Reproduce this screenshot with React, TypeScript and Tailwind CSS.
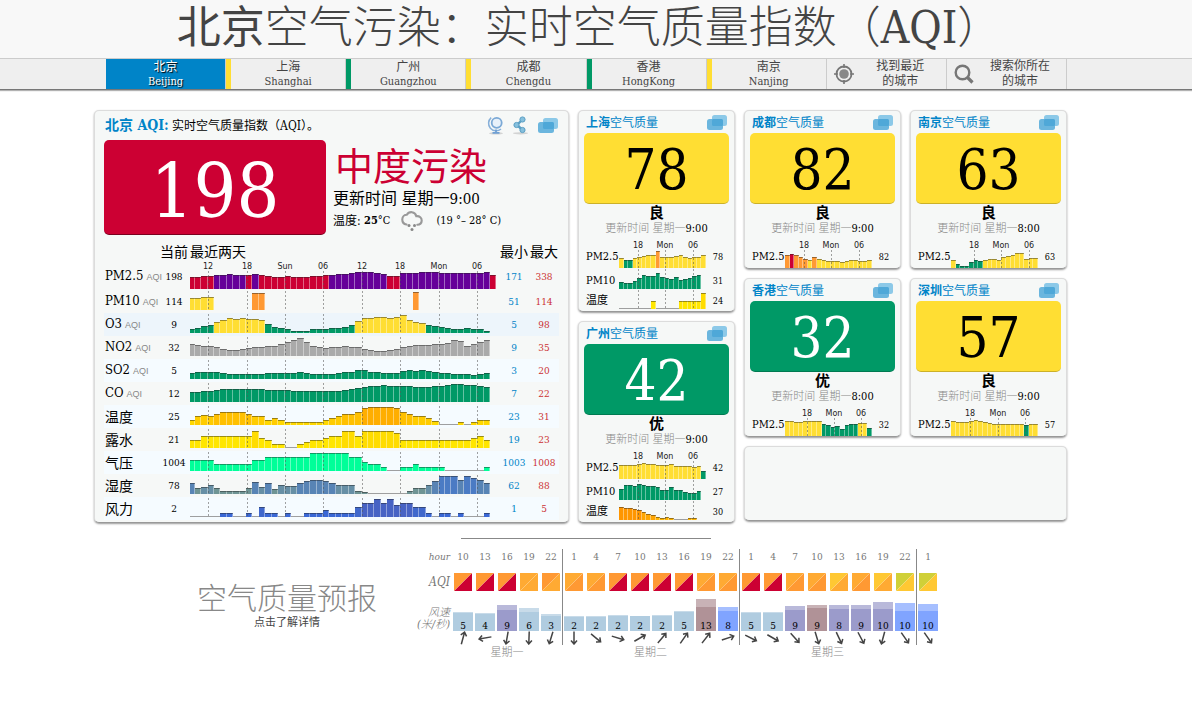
import React from "react";

const SERIF = "font-['DejaVu_Serif_Condensed','DejaVu_Serif','Noto_Sans_CJK_SC',serif]";

const RED = "#cc0033";
const PURPLE = "#660099";
const YELLOW = "#ffde33";
const ORANGE = "#ff9933";
const GREEN = "#009966";
const GRAY = "#aaaaaa";

type Bar = { h: number; c: string };
type Mark = { x: number; label: string };

const LETTERS: Record<string, string> = { r: RED, p: PURPLE, y: YELLOW, o: ORANGE, g: GREEN, n: GRAY };

/** Pairs heights with colour letters such as "r4 p5". */
function paint(heights: number[], spec: string): Bar[] {
  const colours = spec.split(" ").flatMap((s) => Array<string>(Number(s.slice(1))).fill(LETTERS[s[0]]));
  return heights.map((h, i) => ({ h, c: colours[i] ?? colours[colours.length - 1] }));
}

function shade(heights: number[], pick: (h: number) => string): Bar[] {
  return heights.map((h) => ({ h, c: pick(h) }));
}

const warm = (h: number) => (h >= 17 ? "#ffae00" : h >= 11 ? "#ffc000" : h >= 7 ? "#ffcc00" : "#ffd800");
const hot = (h: number) => (h >= 10 ? "#ff9600" : h >= 5 ? "#ffa500" : "#ffb400");
const dew = (h: number) => (h >= 15 ? "#ffdc00" : "#ffe600");
const humid = (h: number) => (h >= 16 ? "#4b7bc4" : h >= 11 ? "#5884b5" : h >= 7 ? "#678fa5" : "#6f9494");
const wind = (h: number) => (h >= 12 ? "#4763c4" : h >= 9 ? "#4068cc" : "#3a68d6");

function Bars({ bars, base, step, first }: { bars: Bar[]; base: number; step: number; first: number }) {
  return (
    <>
      {bars.map((b, i) => {
        if (b.h === 0) return null;
        const x = i === 0 ? 0 : first + step * (i - 1);
        const w = i === 0 ? first : step;
        return (
          <g key={i}>
            {b.h > 1 && <rect x={x} y={base - b.h} width={w} height={b.h} fill={b.c} />}
            {b.h > 1 && <rect x={x + w - 1} y={base - b.h} width={1} height={b.h} fill="#fff" opacity={0.4} />}
            <rect x={x} y={base - b.h} width={w} height={1} fill={b.h > 1 ? "#222" : "#888"} opacity={b.h > 1 ? 0.45 : 0.8} />
          </g>
        );
      })}
    </>
  );
}

function Chart({
  bars, width, height, pad = 0, step, first, marks, labels = false,
}: {
  bars: Bar[]; width: number; height: number; pad?: number; step: number; first: number; marks: Mark[]; labels?: boolean;
}) {
  return (
    <svg width={width} height={height} className="block overflow-visible" shapeRendering="crispEdges" aria-hidden="true">
      <Bars bars={bars} base={height - pad} step={step} first={first} />
      {marks.map((m) => (
        <g key={m.x}>
          <line x1={m.x} x2={m.x} y1={labels ? 9 : 1} y2={height - pad} stroke="#555" strokeOpacity={0.55} strokeDasharray="2 2" />
          {labels && (
            <text x={m.x} y={7} textAnchor="middle" fontSize={8} fontFamily="DejaVu Sans, sans-serif" fill="#222">
              {m.label}
            </text>
          )}
        </g>
      ))}
    </svg>
  );
}

const mainMarks: Mark[] = [
  { x: 18, label: "12" }, { x: 57, label: "18" }, { x: 95, label: "Sun" }, { x: 133, label: "06" },
  { x: 172, label: "12" }, { x: 210, label: "18" }, { x: 249, label: "Mon" }, { x: 287, label: "06" },
];

type Row = { name: string; unit?: boolean; now: string; min: string; max: string; bars: Bar[]; tone: string };

const rows: Row[] = [
  {
    name: "PM2.5", unit: true, now: "198", min: "171", max: "338", tone: "",
    bars: paint(
      [12, 12, 13, 13, 14, 14, 15, 14, 14, 14, 15, 14, 13, 12, 12, 13, 12, 12, 12, 13, 13, 14, 14, 15, 15, 16, 17, 17, 17, 16, 15, 13, 13, 16, 16, 16, 17, 17, 17, 16, 16, 16, 16, 16, 16, 16, 17, 14],
      "r4 p5 r1 p1 r11 p9 r2 p14 r1",
    ),
  },
  {
    name: "PM10", unit: true, now: "114", min: "51", max: "114", tone: "",
    bars: paint([12, 12, 13, 13, 0, 0, 0, 0, 0, 0, 17, 17, ...Array<number>(23).fill(0), 18], "y4 o40"),
  },
  {
    name: "O3", unit: true, now: "9", min: "5", max: "98", tone: "bg-[#edf5fb]",
    bars: paint(
      [4, 5, 7, 8, 11, 13, 15, 14, 15, 14, 14, 13, 9, 6, 5, 4, 2, 2, 2, 4, 4, 4, 5, 5, 6, 8, 12, 15, 15, 16, 16, 15, 16, 18, 13, 11, 10, 8, 7, 6, 5, 4, 4, 5, 4, 4, 2],
      "g4 y8 g14 y11 g10",
    ),
  },
  {
    name: "NO2", unit: true, now: "32", min: "9", max: "35", tone: "",
    bars: paint(
      [12, 11, 10, 10, 9, 7, 6, 6, 7, 8, 9, 9, 10, 10, 12, 14, 16, 18, 14, 10, 9, 8, 9, 9, 10, 9, 9, 7, 6, 5, 5, 6, 7, 9, 10, 11, 11, 11, 12, 12, 13, 16, 15, 10, 12, 14, 16],
      "n47",
    ),
  },
  {
    name: "SO2", unit: true, now: "5", min: "3", max: "20", tone: "bg-[#f5fbff]",
    bars: paint(
      [6, 7, 7, 7, 7, 6, 5, 5, 5, 5, 5, 5, 6, 6, 6, 6, 6, 7, 6, 5, 5, 5, 5, 6, 7, 7, 9, 9, 7, 7, 6, 6, 6, 8, 9, 8, 9, 8, 7, 6, 6, 5, 5, 5, 4, 5, 6],
      "g47",
    ),
  },
  {
    name: "CO", unit: true, now: "12", min: "7", max: "22", tone: "",
    bars: paint(
      [10, 10, 11, 11, 12, 13, 13, 13, 13, 13, 13, 13, 12, 12, 12, 12, 11, 11, 11, 11, 11, 11, 11, 11, 12, 13, 14, 15, 16, 16, 17, 16, 16, 16, 16, 15, 15, 15, 16, 16, 17, 18, 18, 17, 17, 16, 15],
      "g47",
    ),
  },
  {
    name: "温度", now: "25", min: "23", max: "31", tone: "bg-[#f5fbff]",
    bars: shade(
      [5, 9, 10, 9, 11, 13, 13, 13, 13, 11, 9, 9, 5, 7, 5, 3, 3, 3, 3, 3, 3, 5, 7, 9, 11, 11, 13, 17, 18, 18, 18, 18, 17, 13, 11, 9, 9, 7, 4, 1, 1, 1, 3, 1, 3, 5, 5],
      warm,
    ),
  },
  {
    name: "露水", now: "21", min: "19", max: "23", tone: "",
    bars: shade(
      [8, 8, 12, 12, 12, 12, 12, 12, 12, 12, 17, 10, 8, 4, 4, 1, 1, 4, 6, 8, 8, 10, 12, 12, 17, 17, 12, 17, 17, 17, 17, 17, 15, 8, 8, 8, 8, 8, 8, 8, 8, 8, 8, 8, 10, 12, 8],
      dew,
    ),
  },
  {
    name: "气压", now: "1004", min: "1003", max: "1008", tone: "bg-[#f5fbff]",
    bars: shade(
      [11, 11, 11, 11, 7, 7, 7, 7, 7, 7, 11, 11, 14, 14, 14, 14, 14, 14, 14, 18, 18, 18, 18, 18, 18, 14, 14, 9, 7, 7, 4, 1, 1, 4, 4, 7, 4, 4, 4, 4, 1, 1, 1, 1, 1, 1, 4],
      () => "#00ff99",
    ),
  },
  {
    name: "湿度", now: "78", min: "62", max: "88", tone: "",
    bars: shade(
      [11, 6, 7, 9, 6, 3, 3, 3, 3, 6, 12, 7, 11, 5, 9, 8, 8, 11, 13, 14, 14, 13, 11, 9, 9, 9, 3, 2, 1, 1, 1, 1, 1, 1, 3, 6, 6, 9, 13, 18, 18, 18, 14, 18, 16, 14, 11],
      humid,
    ),
  },
  {
    name: "风力", now: "2", min: "1", max: "5", tone: "bg-[#f5fbff]",
    bars: shade(
      [1, 1, 1, 1, 1, 4, 4, 1, 1, 4, 1, 10, 4, 4, 1, 4, 1, 1, 4, 4, 4, 7, 4, 4, 4, 4, 10, 14, 14, 18, 14, 18, 12, 14, 14, 10, 10, 4, 1, 4, 4, 1, 4, 1, 1, 1, 4],
      wind,
    ),
  },
];

type MiniRow = { name: string; value: string; bars: Bar[] };
type City = { name: string; aqi: string; level: string; time: string; good?: boolean; marks: number[]; rows: MiniRow[] };

const shanghai: City = {
  name: "上海", aqi: "78", level: "良", time: "9:00", marks: [19, 46, 74],
  rows: [
    { name: "PM2.5", value: "78", bars: paint([10, 8, 8, 10, 11, 12, 13, 13, 17, 11, 11, 11, 12, 13, 11, 10, 11, 11, 13], "y1 g2 y5 o1 y10") },
    { name: "PM10", value: "31", bars: paint([7, 6, 6, 8, 11, 14, 13, 13, 16, 12, 11, 10, 12, 9, 10, 11, 13, 14], "g18") },
    { name: "温度", value: "24", bars: shade([1, 1, 1, 1, 1, 1, 1, 8, 1, 1, 1, 1, 1, 8, 8, 8, 8, 8, 16], dew) },
  ],
};
const guangzhou: City = {
  name: "广州", aqi: "42", level: "优", time: "9:00", good: true, marks: [19, 46, 74],
  rows: [
    { name: "PM2.5", value: "42", bars: paint([14, 14, 14, 14, 15, 16, 15, 15, 14, 14, 14, 15, 13, 13, 13, 13, 12, 13, 8], "y18 g1") },
    { name: "PM10", value: "27", bars: paint([11, 15, 15, 14, 16, 15, 14, 14, 13, 10, 10, 13, 10, 10, 8, 7, 7, 9], "g18") },
    { name: "温度", value: "30", bars: shade([13, 12, 12, 11, 10, 8, 6, 5, 3, 2, 3, 2, 1, 1, 1, 2, 2], hot) },
  ],
};
const chengdu: City = {
  name: "成都", aqi: "82", level: "良", time: "9:00", marks: [19, 46, 74],
  rows: [{ name: "PM2.5", value: "82", bars: paint([13, 14, 13, 11, 9, 8, 11, 9, 8, 7, 7, 7, 6, 7, 8, 8, 7, 7, 8], "o1 r1 o3 y1 o1 y12") }],
};
const hongkong: City = {
  name: "香港", aqi: "32", level: "优", time: "8:00", good: true, marks: [22, 49, 76],
  rows: [{ name: "PM2.5", value: "32", bars: paint([15, 15, 14, 14, 15, 15, 15, 15, 12, 11, 9, 10, 7, 11, 12, 12, 13, 13, 8], "y8 g8 y2 g1") }],
};
const nanjing: City = {
  name: "南京", aqi: "63", level: "良", time: "8:00", marks: [23, 50, 78],
  rows: [{ name: "PM2.5", value: "63", bars: paint([8, 4, 2, 2, 6, 8, 7, 8, 9, 9, 8, 11, 12, 13, 15, 15, 9, 10, 10], "y1 g6 y12") }],
};
const shenzhen: City = {
  name: "深圳", aqi: "57", level: "良", time: "9:00", marks: [19, 47, 74],
  rows: [{ name: "PM2.5", value: "57", bars: paint([15, 14, 14, 14, 15, 16, 15, 14, 13, 12, 12, 12, 12, 12, 12, 12, 11, 12, 12], "y16 g1 y2") }],
};

const PANEL = "rounded-[5px] border border-[#dcdcdc] border-b-[#999] bg-[#f6f8f7] shadow-[0_1px_2px_rgba(0,0,0,0.4)]";

function ChatIcon() {
  return (
    <svg width="22" height="17" viewBox="0 0 22 17" aria-hidden="true">
      <rect x="6" y="1" width="15" height="11" rx="2.5" fill="#8cc9e8" />
      <rect x="1" y="5" width="16" height="11" rx="2.5" fill="#6bb6de" />
      <rect x="6" y="5" width="11" height="7" rx="1.5" fill="#4fa8d8" />
    </svg>
  );
}

function GlobeIcon() {
  return (
    <svg width="18" height="19" viewBox="0 0 18 19" fill="none" aria-hidden="true">
      <ellipse cx="9" cy="17.3" rx="7" ry="1.2" fill="#bbb" opacity="0.6" />
      <circle cx="9.7" cy="6.8" r="5" stroke="#7ba9d6" strokeWidth="1.8" fill="#e8f1fa" />
      <path d="M4.2 1.6a7.3 7.3 0 0 0 9.8 11.4" stroke="#86afd9" strokeWidth="1.5" />
      <path d="M9 13.6v2.6M5.5 16.8h7" stroke="#6fa0d4" strokeWidth="1.8" />
    </svg>
  );
}

function ShareIcon() {
  return (
    <svg width="18" height="19" viewBox="0 0 18 19" aria-hidden="true">
      <ellipse cx="9.5" cy="17.3" rx="7.5" ry="1.1" fill="#bbb" opacity="0.6" />
      <path d="M11.500 3.500 6 9l5.500 5" stroke="#5b9fc4" strokeWidth="2.400" fill="none" />
      <circle cx="11.500" cy="3.500" r="2.600" fill="#86c0dd" stroke="#5b9fc4" />
      <circle cx="5.500" cy="9" r="2.600" fill="#86c0dd" stroke="#5b9fc4" />
      <circle cx="11.500" cy="14" r="2.600" fill="#86c0dd" stroke="#5b9fc4" />
    </svg>
  );
}

function RainIcon() {
  return (
    <svg width="22" height="21" viewBox="0 0 22 21" fill="none" aria-hidden="true">
      <path d="M5.5 13.5C3 13 1.2 11 1.3 8.3C1.4 5.5 3.5 3.8 5.8 3.8C7 1.8 9 1 11 1.2C13.2 1.4 14.8 3 15.3 5.2C18.6 4.8 20.8 7 20.7 9.6C20.6 12 18.8 13.7 16.3 13.7" stroke="#999" strokeWidth="2.1" strokeLinecap="round" />
      <g fill="#888">
        <circle cx="8" cy="14.5" r="1.5" />
        <circle cx="13.5" cy="14.5" r="1.5" />
        <circle cx="11" cy="18.5" r="1.5" />
      </g>
    </svg>
  );
}

function LocateIcon() {
  return (
    <svg width="22" height="22" viewBox="0 0 22 22" fill="none" aria-hidden="true">
      <circle cx="11" cy="11" r="7.5" stroke="#777" strokeWidth="1.8" />
      <circle cx="11" cy="11" r="4.8" fill="#888" />
      <path d="M11 1v4M11 17v4M1 11h4M17 11h4" stroke="#777" strokeWidth="1.6" />
    </svg>
  );
}

function SearchIcon() {
  return (
    <svg width="20" height="20" viewBox="0 0 20 20" fill="none" aria-hidden="true">
      <circle cx="8.5" cy="8.5" r="6.8" stroke="#777" strokeWidth="2.4" />
      <path d="m13.5 13.5 5 5" stroke="#777" strokeWidth="3.2" />
    </svg>
  );
}

function CityCard({ city }: { city: City }) {
  const marks = city.marks.map((x, i) => ({ x, label: ["18", "Mon", "06"][i] }));
  return (
    <section className={`${PANEL} px-[5px] ${city.rows.length > 1 ? "pb-[2px]" : ""}`}>
      <header className="flex h-[22px] items-center justify-between pt-px pr-px pl-[2px]">
        <h2 className="text-[12px] leading-[22px] text-[#0084c8]">
          <a href="#city"><b>{city.name}</b>空气质量</a>
        </h2>
        <button type="button" aria-label="评论"><ChatIcon /></button>
      </header>
      <div className={`flex h-[71px] items-center justify-center rounded-[5px] border-b border-black/20 pt-1 text-[56px] leading-none ${city.good ? "bg-[#009966] text-white" : "bg-[#ffde33] text-black"}`}>
        {city.aqi}
      </div>
      <p className="text-center text-[15px] leading-[18px] font-bold">{city.level}</p>
      <p className="text-center text-[11px] leading-[13px]"><span className="font-light text-[#888]">更新时间 星期一</span>{city.time}</p>
      <table className="mt-[6px] w-full table-fixed border-collapse">
        <colgroup><col className="w-[35px]" /><col /><col className="w-[22px]" /></colgroup>
        <tbody>
          {city.rows.map((r, i) => (
            <tr key={r.name}>
              <th scope="row" className={`p-0 pl-[2px] text-left align-bottom text-[11px] leading-[12px] font-normal whitespace-nowrap ${i === 0 ? "pb-[5px]" : "pb-[2px]"}`}>{r.name}</th>
              <td className="p-0 align-bottom">
                <Chart bars={r.bars} width={87} height={[27, 21, 20][i]} step={4.58} first={4.58} marks={marks} labels={i === 0} />
              </td>
              <td className={`p-0 text-center align-bottom text-[9px] leading-[12px] ${i === 0 ? "pb-[5px]" : "pb-[2px]"}`}>{r.value}</td>
            </tr>
          ))}
        </tbody>
      </table>
    </section>
  );
}

const cities = [
  { zh: "上海", en: "Shanghai", strip: "border-l-[#ffde33]" },
  { zh: "广州", en: "Guangzhou", strip: "border-l-[#009966]" },
  { zh: "成都", en: "Chengdu", strip: "border-l-[#ffde33]" },
  { zh: "香港", en: "HongKong", strip: "border-l-[#009966]" },
  { zh: "南京", en: "Nanjing", strip: "border-l-[#ffde33]" },
];

const LB = "#b0cce0";
const PU = "#9b9bcb";
const MA = "#b09297";
const BL = "#80a4ff";
const A = "#ffaa33";
const Y = "#ffc833";
const G = "#d0d038";

type Slot = { hour: number; from: string; to: string; wind: number; c: string; gust: number; h: number; dir: number };
const slot = (hour: number, from: string, to: string, w: number, c: string, gust: number, h: number, dir: number): Slot => ({ hour, from, to, wind: w, c, gust, h, dir });

const days: { name: string; slots: Slot[] }[] = [
  {
    name: "星期一",
    slots: [
      slot(10, ORANGE, RED, 5, LB, 19, 18, 15), slot(13, ORANGE, RED, 4, LB, 18, 17, 260), slot(16, ORANGE, RED, 9, PU, 26, 21, 190),
      slot(19, A, A, 6, LB, 23, 19, 182), slot(22, ORANGE, A, 3, LB, 17, 15, 197),
    ],
  },
  {
    name: "星期二",
    slots: [
      slot(1, A, ORANGE, 2, LB, 15, 14, 180), slot(4, A, ORANGE, 2, LB, 15, 14, 130), slot(7, ORANGE, RED, 2, LB, 16, 15, 107),
      slot(10, ORANGE, RED, 2, LB, 15, 15, 60), slot(13, ORANGE, RED, 2, LB, 16, 15, 40), slot(16, ORANGE, RED, 5, LB, 20, 19, 35),
      slot(19, A, ORANGE, 13, MA, 32, 24, 38), slot(22, A, ORANGE, 8, BL, 24, 20, 72),
    ],
  },
  {
    name: "星期三",
    slots: [
      slot(1, ORANGE, RED, 5, LB, 19, 18, 117), slot(4, ORANGE, RED, 5, LB, 19, 18, 120), slot(7, A, ORANGE, 9, PU, 25, 21, 138),
      slot(10, A, ORANGE, 9, MA, 26, 23, 163), slot(13, Y, A, 8, PU, 26, 22, 155), slot(16, A, ORANGE, 9, PU, 26, 22, 152),
      slot(19, Y, A, 10, PU, 29, 22, 195), slot(22, G, Y, 10, BL, 28, 20, 145),
    ],
  },
  { name: "", slots: [slot(1, G, Y, 10, BL, 27, 20, 145)] },
];

const edge = (d: number, i: number) => (d > 0 && i === 0 ? "border-l border-[#888]" : "");

export default function App() {
  return (
    <div className={`min-h-screen bg-white text-black ${SERIF}`}>
      <h1 className="bg-[#f8f8f8] pt-[2px] pr-[14px] pb-1 text-center text-[44px] leading-[52px] font-light whitespace-nowrap text-[#444]">
        <span className="font-normal">北京</span>空气污染：实时空气质量指数（AQI）
      </h1>

      <nav className="border-t border-b border-t-[#ccc] border-b-[#777] bg-[#efefef] pr-[31px] shadow-[0_1px_1px_rgba(0,0,0,0.3)]">
        <div className="mx-auto grid max-w-[973px] grid-cols-8 pl-3 text-center text-[#444]">
          <a href="#beijing" className="flex h-[30px] flex-col justify-center border-r border-[#ccc] bg-[#0084c8] text-white [text-shadow:1px_1px_1px_#000]">
            <span className="text-[12px] leading-[15px]">北京</span>
            <span className="text-[11px] leading-[14px]">Beijing</span>
          </a>
          {cities.map((c) => (
            <a key={c.en} href="#city" className={`flex h-[30px] flex-col justify-center border-r border-l-[5px] border-r-[#ccc] ${c.strip}`}>
              <span className="text-[12px] leading-[15px]">{c.zh}</span>
              <span className="text-[11px] leading-[14px]">{c.en}</span>
            </a>
          ))}
          <button type="button" className="flex h-[30px] items-center border-r border-[#ccc] pl-[6px]">
            <LocateIcon />
            <span className="flex-1 text-[12px] leading-[15px]">找到最近<br />的城市</span>
          </button>
          <button type="button" className="flex h-[30px] items-center border-r border-[#ccc] pl-[7px]">
            <SearchIcon />
            <span className="flex-1 text-[12px] leading-[15px]">搜索你所在<br />的城市</span>
          </button>
        </div>
      </nav>

      <div className="pr-[31px]">
        <main className="mx-auto mt-[20px] flex max-w-[973px] items-stretch gap-[9px]">
          <section className={`${PANEL} min-w-0 flex-1 px-[9px] pb-[2px]`}>
            <header className="flex h-[29px] items-center justify-between pl-px">
              <h2 className="text-[12px]">
                <b className="text-[14px] text-[#0084c8]">北京 AQI:</b> 实时空气质量指数（AQI）。
              </h2>
              <div className="flex items-center gap-[6px]">
                <button type="button" aria-label="地图"><GlobeIcon /></button>
                <button type="button" aria-label="分享"><ShareIcon /></button>
                <button type="button" aria-label="评论" className="pl-[2px]"><ChatIcon /></button>
              </div>
            </header>
            <div className="flex gap-[7px]">
              <div className="flex h-[95px] w-[222px] items-center justify-center rounded-[5px] border-b border-black/40 bg-[#cc0033] pt-2 text-[75px] leading-none text-white">198</div>
              <div className="whitespace-nowrap">
                <p className="pt-[6px] pl-[2px] text-[38px] leading-[43px] text-[#cc0033]">中度污染</p>
                <p className="text-[16px] leading-[20px]">更新时间 星期一<span className="text-[15px]">9:00</span></p>
                <div className="flex items-center text-[12px] leading-[24px]">
                  温度:&nbsp;<b className="text-[11px]">25</b><span className="text-[11px]">°C</span>
                  <span className="mr-[13px] ml-[11px]"><RainIcon /></span>
                  <span className="text-[11px]">(19 °– 28° C)</span>
                </div>
              </div>
            </div>
            <table className="mt-[8px] w-full table-fixed border-collapse">
              <colgroup>
                <col className="w-[55px]" /><col className="w-[30px]" /><col /><col className="w-[30px]" /><col className="w-[30px]" />
              </colgroup>
              <thead>
                <tr className="text-[14px] leading-[19px]">
                  <td className="p-0" />
                  <th scope="col" className="p-0 font-normal whitespace-nowrap">当前</th>
                  <th scope="col" className="p-0 pl-px text-left font-normal">最近两天</th>
                  <th scope="col" className="p-0 font-normal whitespace-nowrap">最小</th>
                  <th scope="col" className="p-0 font-normal whitespace-nowrap">最大</th>
                </tr>
              </thead>
              <tbody>
                {rows.map((r, i) => (
                  <tr key={r.name} className={r.tone}>
                    <th scope="row" className={`p-0 pl-px text-left leading-[20px] font-normal whitespace-nowrap ${r.unit ? "text-[13px]" : "text-[14px]"}`}>
                      {r.name}
                      {r.unit && <span className="pl-[3px] font-['Liberation_Sans',sans-serif] text-[9px] text-[#888]">AQI</span>}
                    </th>
                    <td className="p-0 text-center text-[10px]">{r.now}</td>
                    <td className="p-0 pl-px">
                      <Chart bars={r.bars} width={307} height={i === 0 ? 28 : 23} pad={i === 0 ? 1 : 3} step={6.42} first={4.67} marks={mainMarks} labels={i === 0} />
                    </td>
                    <td className="p-0 text-center text-[10px] text-[#0084c8]">{r.min}</td>
                    <td className="p-0 text-center text-[10px] text-[#cc3333]">{r.max}</td>
                  </tr>
                ))}
              </tbody>
            </table>
          </section>

          <div className="flex w-[157px] flex-col justify-between">
            <CityCard city={shanghai} />
            <CityCard city={guangzhou} />
          </div>

          <div className="flex flex-col gap-[9px]">
            <div className="grid grid-cols-[157px_157px] gap-[9px]">
              <CityCard city={chengdu} />
              <CityCard city={nanjing} />
              <CityCard city={hongkong} />
              <CityCard city={shenzhen} />
            </div>
            <section className={`${PANEL} mb-[2px] flex-1`} />
          </div>
        </main>

        <section className="mx-auto mt-[15px] max-w-[973px]">
          <hr className="mr-auto ml-[367px] w-[250px] border-[#888]" />
          <div className="mt-[10px] flex items-start">
            <a href="#forecast" className="mt-[32px] ml-[103px] w-[180px] text-center font-light text-[#888]">
              <span className="block text-[30px] leading-[36px] whitespace-nowrap">空气质量预报</span>
              <span className="block text-[11px] leading-[12px] font-normal text-[#444]">点击了解详情</span>
            </a>
            <table className="ml-[31px] table-fixed border-separate border-spacing-0">
              <tbody>
                <tr className="h-[16px] text-[10px] leading-[14px] text-[#777]">
                  <th scope="row" className="w-[44px] p-0 pr-[2px] text-right font-normal italic">hour</th>
                  {days.flatMap((d, di) => d.slots.map((s, i) => (
                    <td key={`${di}-${i}`} className={`p-0 text-center ${edge(di, i)}`}>{s.hour}</td>
                  )))}
                </tr>
                <tr className="h-[34px]">
                  <th scope="row" className="p-0 pr-[2px] text-right text-[12px] font-normal text-[#777] italic">AQI</th>
                  {days.flatMap((d, di) => d.slots.map((s, i) => (
                    <td key={`${di}-${i}`} className={`p-0 ${edge(di, i)}`}>
                      <svg width="22" height="18" className="block" aria-hidden="true">
                        <rect x="2" width="18" height="18" fill={s.from} />
                        <path d="M20 0v18H2z" fill={s.to} />
                        <path d="M20 0 2 18" stroke="#fff" strokeOpacity="0.4" strokeWidth="0.8" />
                      </svg>
                    </td>
                  )))}
                </tr>
                <tr className="h-[46px]">
                  <th scope="row" className="p-0 pr-[2px] pb-[14px] text-right align-bottom text-[11px] leading-[12px] font-light text-[#777] italic">风速<br />(米/秒)</th>
                  {days.flatMap((d, di) => d.slots.map((s, i) => (
                    <td key={`${di}-${i}`} className={`p-0 align-bottom ${edge(di, i)}`}>
                      <svg width="22" height="46" className="block" aria-hidden="true">
                        <rect x="1" y={32 - s.gust} width="20" height={s.gust} fill={s.c} opacity="0.7" />
                        <rect x="1" y={32 - s.h} width="20" height={s.h} fill={s.c} />
                        <text x="11" y="30" textAnchor="middle" fontSize="10" fill="#000">{s.wind}</text>
                        <g transform={`rotate(${s.dir} 11 39)`} stroke="#444" strokeWidth="1.5" fill="none">
                          <path d="M11 45.5V33M8 36.5 11 33l3 3.5" />
                        </g>
                      </svg>
                    </td>
                  )))}
                </tr>
                <tr className="text-[11px] leading-[15px] font-light text-[#888]">
                  <td />
                  {days.map((d, i) => (
                    <td key={i} colSpan={d.slots.length} className="p-0 text-center">{d.name}</td>
                  ))}
                </tr>
              </tbody>
            </table>
          </div>
        </section>
      </div>
    </div>
  );
}
